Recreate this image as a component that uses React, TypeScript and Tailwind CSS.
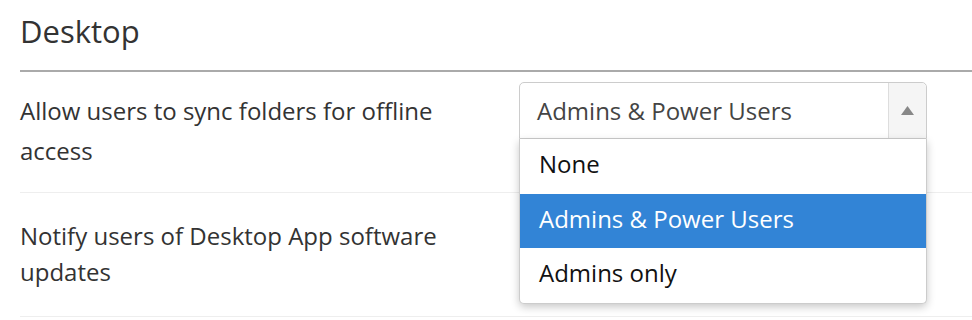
import React from "react";

export default function App() {
  const options = ["None", "Admins & Power Users", "Admins only"];
  const selected = 1;
  return (
    <div
      className="w-[972px] h-[320px] bg-white overflow-hidden pl-5 text-[#333]"
      style={{ fontFamily: '"Open Sans", "Noto Sans", sans-serif' }}
    >
      <div className="h-[72px] border-b-2 border-[#aaaaaa] pt-[10px]">
        <h2 className="text-[31px] leading-[42px] font-normal text-[#333]">Desktop</h2>
      </div>

      <div className="flex h-[121px] border-b border-[#eeeeee]">
        <div className="w-[499px] pt-[19px] text-[24px] leading-[40px]">
          <div className="w-[470px]">Allow users to sync folders for offline access</div>
        </div>
        <div className="relative pt-[10px]">
          <div className="w-[408px] h-[57px] flex border border-[#cccccc] rounded-t-[5px] bg-white">
            <div className="flex-1 flex items-center pl-[17px] text-[24px] text-[#444]">
              Admins &amp; Power Users
            </div>
            <div className="w-[38px] flex items-center justify-center bg-[#f5f5f5] border-l border-[#dddddd] rounded-tr-[5px]">
              <svg width="13" height="9" viewBox="0 0 13 9">
                <path d="M6.5 0 L13 9 L0 9 Z" fill="#888888" />
              </svg>
            </div>
          </div>
          <div className="absolute left-0 top-[67px] z-10 w-[408px] bg-white border border-t-0 border-[#cccccc] rounded-b-[5px] shadow-[0_3px_8px_rgba(0,0,0,0.22)] overflow-hidden">
            {options.map((o, i) => (
              <div
                key={o}
                className={
                  i === selected
                    ? "h-[54px] flex items-center pl-[19px] pb-[5px] text-[24px] bg-[#3284d6] text-white"
                    : "h-[55px] flex items-center pl-[19px] pb-[5px] text-[24px] text-[#111]"
                }
              >
                {o}
              </div>
            ))}
          </div>
        </div>
      </div>

      <div className="flex h-[124px] border-b border-[#eeeeee]">
        <div className="w-[499px] pt-[25px] text-[24px] leading-[36px]">
          <div className="w-[470px]">Notify users of Desktop App software updates</div>
        </div>
      </div>
    </div>
  );
}
